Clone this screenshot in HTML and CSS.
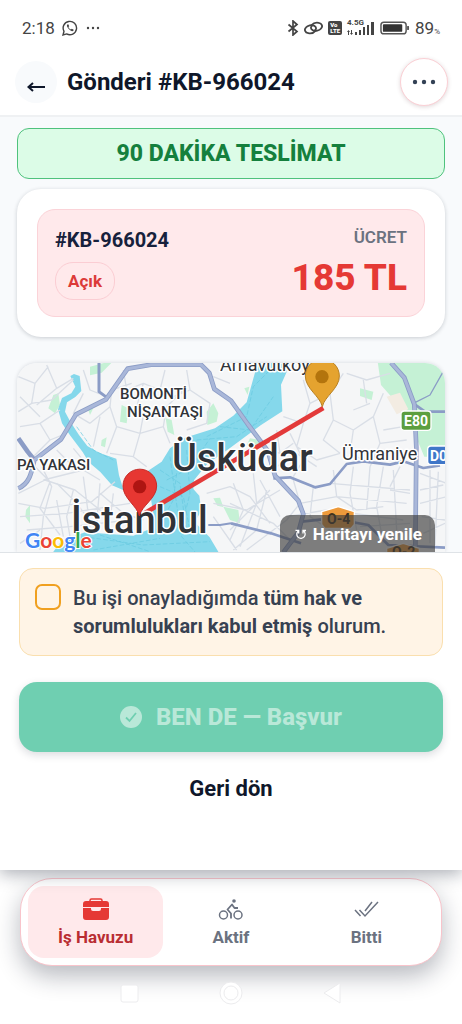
FILE: index.html
```
<!DOCTYPE html>
<html lang="tr">
<head>
    <meta charset="utf-8">
    <meta name="viewport" content="width=device-width, initial-scale=1">
    <title>Gönderi #KB-966024</title>
    <link rel="stylesheet" href="styles.css">
</head>
<body>
    <div class="status-bar">
        <span class="clock">2:18</span>
        <svg class="wa-icon" width="16" height="16" viewBox="0 0 16 16" fill="none" stroke="#444" stroke-width="1.4">
            <path d="M1 15l1-3.700a6.700 6.700 0 1 1 2.600 2.600z"/>
            <path d="M5.300 4.500c-1 1 0 3 1.500 4.600s3.600 2.700 4.600 1.600l.3-1-1.900-1-.9.900C7.700 9 6.700 8 6.400 7l.8-.8-.9-1.900z" fill="#444" stroke="none"/>
        </svg>
        <svg width="16" height="4" viewBox="0 0 16 4" fill="#444"><circle cx="3" cy="2" r="1.200"/><circle cx="8" cy="2" r="1.200"/><circle cx="13" cy="2" r="1.200"/></svg>
        <div class="status-right">
            <svg width="12" height="16" viewBox="0 0 12 16" fill="none" stroke="#444" stroke-width="1.700"><path d="M1.500 4.500l8.500 7L6 15V1l4 3.500-8.500 7"/></svg>
            <svg width="19" height="16" viewBox="0 0 20 16" fill="none" stroke="#444" stroke-width="1.900" stroke-linecap="round"><path d="M12 11c-2 2.500-5 3-7.500 2.500C1 13 0 9.500 2 7.500 4 5 8 4.500 10.500 5.500c3 1.500 2.500 3.500 1 5"/><path d="M8 5c2-2.500 5-3 7.500-2.500C19 3 20 6.500 18 8.500c-2 2.500-6 3-8.500 2C6.500 9 7 7 8.500 5.500"/></svg>
            <span class="volte">Vo<br>LTE</span>
            <span class="signal">
                <span class="net">4.5G</span>
                <svg width="28" height="14" viewBox="0 0 28 14" fill="#444"><path d="M1 10h1v4H1zM0 11l1.500-2L3 11zM4 9h1v4H4zM3 12h3l-1.500 2zM8 11h2v3H8zM12 9h2v5h-2zM16 6h2v8h-2zM20 4h2v10h-2zM24 1h3v13h-3z"/></svg>
            </span>
            <svg width="30" height="14" viewBox="0 0 31 14"><rect x="1" y="1" width="26" height="12" rx="3" fill="none" stroke="#555" stroke-width="1.500"/><rect x="3" y="3" width="20" height="8" rx="1" fill="#333"/><path d="M29 5v4" stroke="#555" stroke-width="2"/></svg>
            <span class="battery">89<small>%</small></span>
        </div>
    </div>

    <header class="top-bar">
        <button class="back-btn" type="button" aria-label="Geri">
            <svg width="18" height="12" viewBox="0 0 18 12" fill="none" stroke="#0f172a" stroke-width="2"><path d="M18 6H3M6 2L1.500 6 6 10"/></svg>
        </button>
        <h1>Gönderi #KB-966024</h1>
        <button class="more-btn" type="button" aria-label="Menü">
            <svg width="24" height="6" viewBox="0 0 24 6" fill="#334155"><circle cx="3" cy="3" r="2.200"/><circle cx="12" cy="3" r="2.200"/><circle cx="21" cy="3" r="2.200"/></svg>
        </button>
    </header>

    <main class="content">
        <div class="delivery-banner">90 DAKİKA TESLİMAT</div>

        <section class="card">
            <div class="price-box">
                <div class="left">
                    <div class="code">#KB-966024</div>
                    <span class="badge">Açık</span>
                </div>
                <div class="right">
                    <div class="label">ÜCRET</div>
                    <div class="price">185 TL</div>
                </div>
            </div>
        </section>

        <section class="map">
            <svg class="map-svg" viewBox="0 0 428 189" preserveAspectRatio="xMidYMin slice">
                <!-- geometry is drawn on a grid three times finer than the labels -->
                <g transform="translate(-17 -13) scale(.33333)" fill="none" stroke-linejoin="round">
                    <rect x="40" y="30" width="1310" height="590" fill="#f5f6f7"/>
                    <!-- parks -->
                    <g fill="#c5f1d5">
                        <path d="M270 50l45-12h20l-30 30-35 8zM160 135l15-5 5 35-15 25-20-15zM265 180l15-5-10 20zM365 165l20 10-5 45-20-5zM620 185l20-25 15 30-5 25-28 10zM497 205l18 5 8 45-20-10zM305 270l15-8-5 30-12-5zM78 480l12-15v55l-14-20z"/>
                        <path d="M1133 35h210v285h-70l-25-60-10-60-60-55-35-40zM1080 115l40 10-5 25-35-12zM733 115l15-5-5 25zM640 445l20-2 10 28-18-4zM670 470l45 10 5 40-30-10zM750 265l35 5-20 25-25-10z"/>
                    </g>
                    <path d="M1160 140l40-12 25 50-35 15z" fill="#f3ece2"/>
                    <!-- water -->
                    <g fill="#85d8eb">
                        <path d="M222 72l17 6 5 45-18 18-25 16-6 28 16 30 26 40 25 33 35 20 52 18 8 50 14 45-35-15-35-40-35-30-18-30-38-50-24-36-12-42 12-34 28-14 12-20-15-32z"/>
                        <path d="M440 365l45-30 25-40 45-32 90-28 55-38 40-40 35-125h100l-32 72 4 80-65 42-95 70-65 45-40 50-2 26 18 20 6 45-20 35 45 45 30 50H155l30-40 70-25 145 10 50-20 10-45z"/>
                    </g>
                    <g stroke="#67c8df" stroke-width="2" stroke-dasharray="14 6">
                        <path d="M480 360l60 40 20 150M510 320l15 110 20 130 40 46M500 390l70-35 60-90M540 290l-20 160-50 90M560 300l10 130-30 120M590 270l120-10 90-60M620 260l120-60 20-90 60-60M660 230l90 10 70-100M250 560l180 25 200-10M300 555l150 50M280 600l200-35M480 410l70 30 20 100M230 230l50 70 60 30"/>
                    </g>
                    <!-- local streets -->
                    <g stroke="#d9dee6" stroke-width="4">
                        <path d="M55 80l50 20 40-50M105 100l-10 60-40 25M95 160l60-10 65-60M60 230l60-10 60-40M120 220l30 50-50 50M150 270l50-20M60 140l60 60M140 45l30 70 50-30M170 115l-60 50M250 60l20 60 50 20M250 130l-30 60 50 30M270 220l60-50 5-50 60-20M330 170l20 60 70 20 15-80M300 200l-20 90M350 230l-30 80M420 250l-20 70-70-10M420 250l70-20 10-60 60-60M490 230l20 50M400 320l40 30M370 60l10 60 50-20 50 20 15-60M430 100l-20 70M560 60l10 60-50 20M570 120l60 40-10 60-60 20M640 80l50 20"/>
                        <path d="M55 430l80-40 90 30 100 80M100 345l50 50-30 80 60 80M55 460l80 15 140-20 70-60M60 500l140-10 190-30M80 540l130-10 180-20M60 580l60-40M130 390l120-30 50 30M170 450l20 110M220 420l-20 80 10 60M250 380l20 150M170 400l60 60 60 80M300 400l-10 120M340 430l-10 80M300 430l70 60 60 20M125 350l30 60-25 90-10 100M170 300l60 60M220 295l50 60"/>
                        <path d="M850 200l60 20 20-60 60-30 40-60M910 220l-20 70 60 40 70-20M930 160l-20-70M990 130l10 80 60 30 60-40 30-70M1000 210l-30 60 50 40M1060 240l-10 70 60 30M1120 200l20 80-30 70M1040 70l60 20 70-20M1090 90l10 70M950 60l40 30M1150 240l60-10M1140 280l80-10M1060 180l50-20M870 250l40 80-30 50M780 290l60 20 40-30M830 240l10 70"/>
                        <path d="M830 350l60-40 60 40M880 390l20 70-40 50M940 410l-10 90 60 40M1000 360l10 80 60 40 80-10M1060 350l-10 80 20 110M1110 350l-10 130M1150 350l-20 120 20 110M900 460l110-20 210 20M860 500l120-20 230 30M1180 360l10 180M1080 530l150-10M1170 420l60 10M1200 350l-30 60M990 400l240 20M1260 370l80 30M1260 420l70-15M1260 460l80-20M1265 500l70 10M1270 550l65-30M1290 360v220M1315 365l-10 220"/>
                        <path d="M620 430l70-20 60 30 60 80M640 460l100 20 100-60M700 400l30 80-40 90M760 370l10 90-50 130M800 420l-30 120-70 60M690 460l130 60 60 60M690 540l120-120M740 600l120-90M780 390l60 110M640 500l70 100"/>
                    </g>
                    <!-- highways -->
                    <g stroke="#8b9cc6" stroke-width="14">
                        <path d="M55 415c35-15 40-50 48-85l80-62 45-75 90-45 65-92 70-12h150l25 25 15 48 50 35 50 70 60 80 22 75 70 75 15 40-15 55-45 60M55 265l28 40 20 25"/>
                        <path d="M1173 38l40 45 30 80 6 130-3 315"/>
                        <path d="M820 385l50-3 75 30 45-10 50-60 50-8 80 10 40-10 60 20 50-8M1240 160l35 25h65M693 520l120 30 90 30M905 515l90-10 110 20 60 60 170 8" stroke-width="8"/>
                        <path d="M297 35v90l20 15" stroke-width="9"/>
                        <path d="M625 525h35l33-5" stroke-width="6"/>
                        <path d="M1240 160l50-25 48-85" stroke-width="4"/>
                    </g>
                    <g stroke="#a9b7d9" stroke-width="9">
                        <path d="M55 415c35-15 40-50 48-85l80-62 45-75 90-45 65-92 70-12h150l25 25 15 48 50 35 50 70 60 80 22 75 70 75 15 40-15 55-45 60M1173 38l40 45 30 80 6 130-3 315"/>
                    </g>
                    <path d="M430 492L970 174" stroke="#e33a3a" stroke-width="14"/>
                    <!-- road shields -->
                    <g stroke="#fff" stroke-width="4">
                        <rect x="1203" y="183" width="90" height="58" rx="10" fill="#5b9e3f"/>
                        <rect x="1283" y="288" width="90" height="56" rx="10" fill="#3f76c8"/>
                        <path d="M965 485l50-15 48 15v38l-10 12h-78l-10-12zM1160 595l50-15 48 15v30h-98z" fill="#ed9a3b"/>
                    </g>
                </g>
                <g class="map-label">
                    <text x="103" y="36" class="area">BOMONTİ</text>
                    <text x="110" y="54" class="area">NİŞANTAŞI</text>
                    <text x="0" y="107" class="area">PA YAKASI</text>
                    <text x="203" y="8" class="town">Arnavutköy</text>
                    <text x="325" y="97" class="town">Ümraniye</text>
                    <text x="155" y="108" class="city">Üsküdar</text>
                    <text x="54" y="170" class="city">İstanbul</text>
                </g>
                <g class="shield">
                    <text x="387" y="63">E80</text>
                    <text x="413" y="98">D0</text>
                    <text x="310" y="161" class="dark">O-4</text>
                    <text x="375" y="194" class="dark">O-2</text>
                </g>
                <g transform="translate(-17 -13) scale(.33333)">
                    <path d="M418 498c-7-32-49-52-49-90a50 50 0 0 1 101 0c0 38-45 58-52 90z" fill="#e73732" stroke="#c52b28" stroke-width="3"/>
                    <circle cx="419" cy="410" r="20" fill="#ae1512"/>
                    <path d="M967 170c-7-32-51-54-51-92a51 51 0 0 1 102 0c0 38-44 60-51 92z" fill="#e5a32f" stroke="#b98122" stroke-width="3"/>
                    <circle cx="966" cy="80" r="20" fill="#b3740d"/>
                </g>
                <text x="8" y="185" class="google"><tspan fill="#4285f4">G</tspan><tspan fill="#ea4335">o</tspan><tspan fill="#fbbc05">o</tspan><tspan fill="#4285f4">g</tspan><tspan fill="#34a853">l</tspan><tspan fill="#ea4335">e</tspan></text>
            </svg>
            <button class="refresh-btn" type="button">
                <svg width="12" height="12" viewBox="0 0 12 12" fill="none" stroke="#fff" stroke-width="1.300"><path d="M8 2.500a4.200 4.200 0 1 1-4.500.3M.5 2.300h3.200v3.200M8 5.500V2.500h3"/></svg>
                Haritayı yenile
            </button>
        </section>
    </main>

    <section class="sheet">
        <label class="confirm" for="confirm">
            <input type="checkbox" id="confirm">
            <span>Bu işi onayladığımda <b>tüm hak ve sorumlulukları kabul etmiş</b> olurum.</span>
        </label>
        <button class="apply-btn" type="button" disabled>
            <svg width="22" height="22" viewBox="0 0 22 22"><circle cx="11" cy="11" r="11" fill="#b9e8d8"/><path d="M6 11.500l3.500 3.500L16 7" fill="none" stroke="#6fcfb1" stroke-width="1.800"/></svg>
            BEN DE — Başvur
        </button>
        <button class="cancel-btn" type="button">Geri dön</button>
    </section>

    <footer class="bottom">
        <nav class="tab-bar">
            <a class="tab active" href="#havuz">
                <svg width="26" height="22" viewBox="0 0 26 22"><path d="M7 4V2.500A1.500 1.500 0 0 1 8.500 1h9A1.500 1.500 0 0 1 19 2.500V4" fill="none" stroke="#e53935" stroke-width="1.500"/><path d="M3 3h20a3 3 0 0 1 3 3v3H0V6a3 3 0 0 1 3-3zM0 10h8v1a2 2 0 0 0 2 2h6a2 2 0 0 0 2-2v-1h8v9a3 3 0 0 1-3 3H3a3 3 0 0 1-3-3z" fill="#e53935"/></svg>
                İş Havuzu
            </a>
            <a class="tab" href="#aktif">
                <svg width="26" height="22" viewBox="0 0 26 22" fill="none" stroke="#6b7280" stroke-width="1.500"><circle cx="5.500" cy="17" r="4"/><circle cx="20" cy="17" r="4"/><path d="M13 20.500v-5l-3.500-4L14 6.500l2.500 3.500H20" stroke-width="1.800" stroke-linejoin="round"/><circle cx="16" cy="3" r="1.800" fill="#6b7280" stroke="none"/></svg>
                Aktif
            </a>
            <a class="tab" href="#bitti">
                <svg width="26" height="22" viewBox="0 0 26 22" fill="none" stroke="#6b7280" stroke-width="1.500"><path d="M2 12l5.500 6M12 13l7-9M6.500 12l5.500 6L25 4"/></svg>
                Bitti
            </a>
        </nav>
        <div class="system-nav">
            <svg width="24" height="28" viewBox="0 0 24 28"><rect x="4" y="6" width="17" height="17" rx="2"/></svg>
            <svg width="28" height="28" viewBox="0 0 28 28"><circle cx="14" cy="14" r="11"/><circle cx="14" cy="14" r="7"/></svg>
            <svg width="24" height="28" viewBox="0 0 24 28"><path d="M19 4v20L3 14z"/></svg>
        </div>
    </footer>
</body>
</html>
```
FILE: styles.css
```
* {
    box-sizing: border-box;
}

body {
    margin: 0;
    font-family: Roboto, "Noto Sans", sans-serif;
    background: #fff;
    color: #0f172a;
}

button {
    font-family: inherit;
    border: none;
    padding: 0;
    cursor: pointer;
}

svg {
    display: block;
    flex-shrink: 0;
}

.status-bar {
    display: flex;
    align-items: center;
    gap: 7px;
    height: 55px;
    padding: 0 22px;
    color: #444;
    font-size: 17px;
}

.status-right {
    display: flex;
    align-items: center;
    gap: 5px;
    margin-left: auto;
}

.volte {
    background: #444;
    color: #fff;
    border-radius: 2px;
    font-size: 6px;
    line-height: 6px;
    font-weight: 900;
    padding: 1px 2px;
}

.signal {
    position: relative;
}

.net {
    position: absolute;
    left: 0;
    top: -3px;
    font-size: 8px;
    line-height: 10px;
    font-weight: 700;
}

.battery small {
    font-size: 8px;
}

.top-bar {
    display: flex;
    align-items: center;
    height: 62px;
    padding: 0 14px 6px 15px;
    border-bottom: 2px solid #eff1f3;
}

.top-bar h1 {
    flex: 1;
    margin: 0 0 0 10px;
    font-size: 24px;
    line-height: 28px;
    font-weight: 700;
}

.back-btn {
    display: flex;
    align-items: center;
    justify-content: center;
    width: 42px;
    height: 42px;
    padding-top: 10px;
    border-radius: 50%;
    background: #f8fafc;
}

.more-btn {
    display: flex;
    align-items: center;
    justify-content: center;
    width: 48px;
    height: 48px;
    border-radius: 50%;
    border: 1px solid #fbd0d5;
    background: #fff;
    box-shadow: 0 1px 4px rgba(100, 50, 60, 0.2);
}

.content {
    padding: 11px 17px 0;
    background: #f8fafc;
}

.delivery-banner {
    padding: 10px 0;
    border: 1px solid #4fc27d;
    border-radius: 12px;
    background: #dcfce7;
    color: #15803d;
    font-size: 23px;
    line-height: 29px;
    font-weight: 800;
    text-align: center;
}

.card {
    margin-top: 10px;
    padding: 20px;
    border-radius: 24px;
    background: #fff;
    box-shadow: 0 1px 4px rgba(15, 23, 42, 0.2);
}

.price-box {
    display: flex;
    justify-content: space-between;
    padding: 16px 17px;
    border: 1px solid #fbd3d8;
    border-radius: 18px;
    background: #ffe9eb;
}

.code {
    font-size: 20px;
    line-height: 28px;
    font-weight: 700;
    color: #17213c;
}

.badge {
    display: inline-block;
    margin-top: 8px;
    padding: 8px 12px;
    border: 1px solid #fbcdd3;
    border-radius: 18px;
    font-size: 17px;
    line-height: 20px;
    font-weight: 700;
    color: #dc3a38;
}

.right {
    text-align: right;
}

.label {
    font-size: 17px;
    line-height: 22px;
    font-weight: 600;
    color: #6b7280;
}

.price {
    margin-top: 8px;
    font-size: 37px;
    line-height: 44px;
    font-weight: 800;
    color: #e53935;
}

.map {
    position: relative;
    margin-top: 26px;
    height: 189px;
    border-radius: 20px 20px 0 0;
    overflow: hidden;
    box-shadow: 0 0 4px rgba(15, 23, 42, 0.15);
}

.map-svg {
    width: 100%;
    height: 100%;
}

.map-label text {
    fill: #303338;
    stroke: #fff;
    stroke-width: 3px;
    stroke-linejoin: round;
    paint-order: stroke;
}

.map-label .area {
    font-size: 15px;
    font-weight: 500;
}

.map-label .town {
    font-size: 18px;
}

.map-label .city {
    font-size: 38px;
    font-weight: 500;
}

.shield {
    font-size: 14px;
    font-weight: 700;
    fill: #fff;
}

.shield .dark {
    fill: #40301c;
}

.google {
    font-family: Lato, sans-serif;
    font-size: 21px;
    font-weight: 700;
    stroke: #fff;
    stroke-width: 2px;
    paint-order: stroke;
}

.refresh-btn {
    position: absolute;
    right: 10px;
    bottom: 0;
    display: flex;
    align-items: center;
    gap: 6px;
    height: 37px;
    padding: 0 13px 0 15px;
    border-radius: 10px 10px 0 0;
    background: rgba(60, 60, 60, 0.65);
    color: #fff;
    font-size: 17px;
    font-weight: 700;
}

.sheet {
    position: relative;
    padding: 15px 19px 64px;
    border-top: 1px solid #dfe3e7;
    background: #fff;
    box-shadow: 0 4px 16px rgba(15, 23, 42, 0.35);
    clip-path: inset(0 0 -30px 0);
}

.confirm {
    display: flex;
    gap: 12px;
    padding: 15px;
    border: 1px solid #fadfae;
    border-radius: 14px;
    background: #fff4e6;
    color: #374151;
    font-size: 20px;
    line-height: 28px;
    font-weight: 500;
}

.confirm input {
    appearance: none;
    flex-shrink: 0;
    width: 26px;
    height: 26px;
    margin: 0;
    border: 2px solid #f0a020;
    border-radius: 7px;
}

.apply-btn {
    display: flex;
    align-items: center;
    justify-content: center;
    gap: 14px;
    width: 100%;
    height: 70px;
    margin-top: 26px;
    border-radius: 18px;
    background: #6fcfb1;
    box-shadow: 0 3px 8px rgba(15, 23, 42, 0.15);
    color: #b9e8d8;
    font-size: 24px;
    font-weight: 800;
}

.cancel-btn {
    display: block;
    width: 100%;
    margin-top: 20px;
    padding: 4px 0;
    background: none;
    color: #0f172a;
    font-size: 22px;
    line-height: 26px;
    font-weight: 700;
}

.bottom {
    padding: 8px 20px 0;
}

.tab-bar {
    display: flex;
    height: 88px;
    padding: 7px;
    border: 1px solid #f8c4cb;
    border-radius: 32px;
    background: #fff;
    box-shadow: 0 10px 24px rgba(15, 23, 42, 0.3);
}

.tab {
    flex: 1;
    display: flex;
    flex-direction: column;
    align-items: center;
    gap: 7px;
    padding-top: 12px;
    border-radius: 16px;
    color: #6b7280;
    font-size: 17px;
    line-height: 20px;
    font-weight: 700;
    text-decoration: none;
}

.tab.active {
    background: #ffe9eb;
    color: #b92d32;
}

.system-nav {
    display: flex;
    justify-content: center;
    gap: 76px;
    padding-top: 13px;
    position: relative;
}

.system-nav svg {
    fill: #fff;
    stroke: #ececee;
    stroke-width: 1px;
}
```
